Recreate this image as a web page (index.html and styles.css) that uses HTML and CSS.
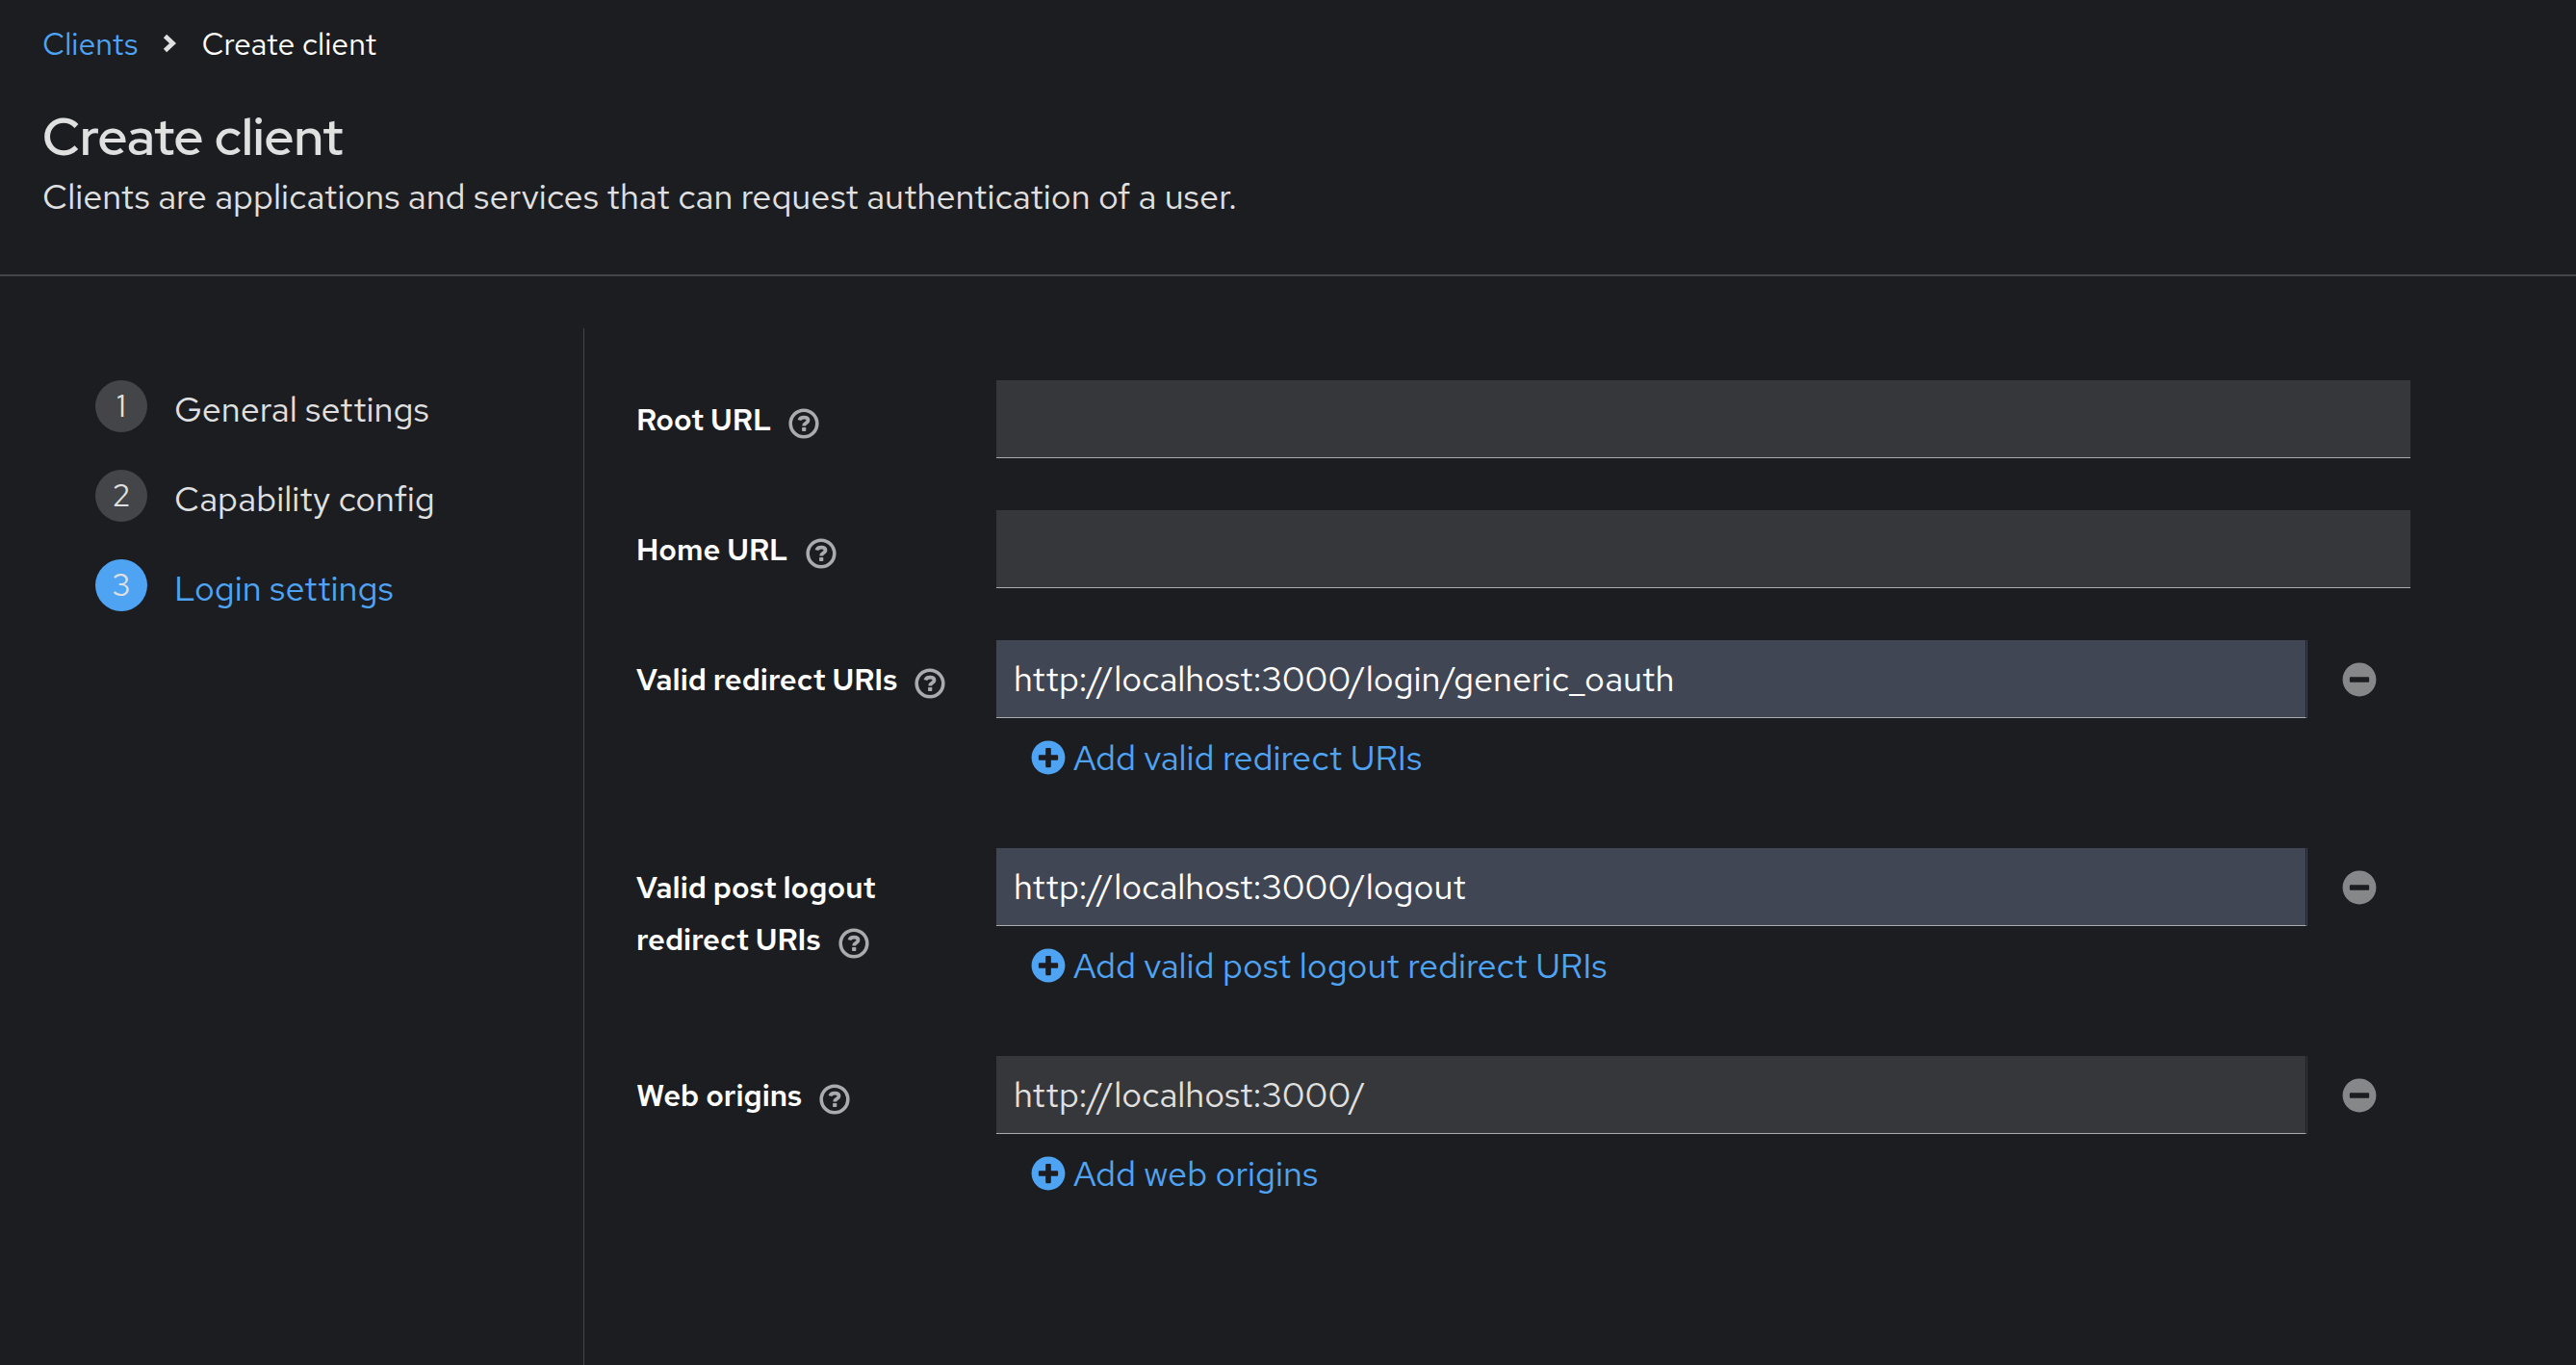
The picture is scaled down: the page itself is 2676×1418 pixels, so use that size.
FILE: index.html
```
<!DOCTYPE html>
<html lang="en">
<head>
<meta charset="utf-8">
<meta name="viewport" content="width=device-width, initial-scale=1">
<title>Create client</title>
<link rel="stylesheet" href="styles.css">
</head>
<body>
<svg class="sprite" aria-hidden="true">
  <symbol id="help" viewBox="0 0 32 32">
    <circle cx="16" cy="16" r="13.8" fill="none" stroke="currentColor" stroke-width="3.6"/>
    <path d="M11.4 12.6C12 10.4 13.700 9.700 16.1 9.700C18.700 9.700 20.500 10.800 20.500 12.700C20.500 15.600 16.2 15.200 16.2 18.400" fill="none" stroke="currentColor" stroke-width="3.8"/>
    <rect x="14.1" y="20" width="4.2" height="3.9" rx=".6" fill="currentColor"/>
  </symbol>
  <symbol id="plus" viewBox="0 0 512 512">
    <path fill="currentColor" d="M256 8C119 8 8 119 8 256s111 248 248 248 248-111 248-248S393 8 256 8zm144 276c0 6.600-5.400 12-12 12h-92v92c0 6.600-5.400 12-12 12h-56c-6.600 0-12-5.400-12-12v-92h-92c-6.600 0-12-5.400-12-12v-56c0-6.600 5.400-12 12-12h92v-92c0-6.600 5.400-12 12-12h56c6.600 0 12 5.400 12 12v92h92c6.600 0 12 5.400 12 12v56z"/>
  </symbol>
  <symbol id="minus" viewBox="0 0 512 512">
    <path fill="currentColor" d="M256 8C119 8 8 119 8 256s111 248 248 248 248-111 248-248S393 8 256 8zM124 296c-6.600 0-12-5.400-12-12v-56c0-6.600 5.400-12 12-12h264c6.600 0 12 5.400 12 12v56c0 6.600-5.400 12-12 12H124z"/>
  </symbol>
</svg>

<header class="page-header">
  <nav class="breadcrumb" aria-label="Breadcrumb">
    <a href="#clients">Clients</a>
    <svg class="chevron" viewBox="0 0 14 20" aria-hidden="true"><path d="M2.500 2.500L10.500 10L2.500 17.500" fill="none" stroke="currentColor" stroke-width="4.800"/></svg>
    <span aria-current="page">Create client</span>
  </nav>
  <h1 class="title">Create client</h1>
  <p class="description">Clients are applications and services that can request authentication of a user.</p>
</header>

<div class="wizard">
  <nav class="steps" aria-label="Wizard steps">
    <button class="step" type="button"><span class="step-number">1</span><span class="step-name">General settings</span></button>
    <button class="step" type="button"><span class="step-number">2</span><span class="step-name">Capability config</span></button>
    <button class="step current" type="button" aria-current="step"><span class="step-number">3</span><span class="step-name">Login settings</span></button>
  </nav>

  <main class="content">
    <form class="form">
      <div class="group">
        <div class="label"><label for="root-url">Root URL</label><button class="help" type="button" aria-label="Help for Root URL"><svg><use href="#help"/></svg></button></div>
        <div class="control"><input class="field" id="root-url" type="text"></div>
      </div>
      <div class="group">
        <div class="label"><label for="home-url">Home URL</label><button class="help" type="button" aria-label="Help for Home URL"><svg><use href="#help"/></svg></button></div>
        <div class="control"><input class="field" id="home-url" type="text"></div>
      </div>
      <div class="group">
        <div class="label"><label for="redirect">Valid redirect URIs</label><button class="help" type="button" aria-label="Help for Valid redirect URIs"><svg><use href="#help"/></svg></button></div>
        <div class="control">
          <div class="entry">
            <input class="field joined autofilled" id="redirect" type="text" value="http://localhost:3000/login/generic_oauth">
            <button class="remove" type="button" aria-label="Remove"><svg><use href="#minus"/></svg></button>
          </div>
          <button class="add" type="button"><svg><use href="#plus"/></svg>Add valid redirect URIs</button>
        </div>
      </div>
      <div class="group">
        <div class="label"><label for="post-logout">Valid post logout redirect URIs</label><button class="help" type="button" aria-label="Help for Valid post logout redirect URIs"><svg><use href="#help"/></svg></button></div>
        <div class="control">
          <div class="entry">
            <input class="field joined autofilled" id="post-logout" type="text" value="http://localhost:3000/logout">
            <button class="remove" type="button" aria-label="Remove"><svg><use href="#minus"/></svg></button>
          </div>
          <button class="add" type="button"><svg><use href="#plus"/></svg>Add valid post logout redirect URIs</button>
        </div>
      </div>
      <div class="group">
        <div class="label"><label for="origins">Web origins</label><button class="help" type="button" aria-label="Help for Web origins"><svg><use href="#help"/></svg></button></div>
        <div class="control">
          <div class="entry">
            <input class="field joined" id="origins" type="text" value="http://localhost:3000/">
            <button class="remove" type="button" aria-label="Remove"><svg><use href="#minus"/></svg></button>
          </div>
          <button class="add" type="button"><svg><use href="#plus"/></svg>Add web origins</button>
        </div>
      </div>
    </form>
  </main>
</div>
</body>
</html>
```
FILE: styles.css
```
:root {
  --bg: #1c1d21;
  --field: #36373a;
  --autofill: #404653;
  --line: #444548;
  --text: #e0e0e0;
  --muted: #aaabac;
  --link: #4fa3f3;
}

* { box-sizing: border-box; }

body {
  display: flex;
  flex-direction: column;
  min-height: 100vh;
  margin: 0;
  background: var(--bg);
  color: var(--text);
  font: 36px/54px "Red Hat Text", Roboto, sans-serif;
}

button {
  padding: 0;
  border: 0;
  background: none;
  color: inherit;
  font: inherit;
  text-align: left;
  cursor: pointer;
}

svg { display: block; flex: none; }
.sprite { position: absolute; width: 0; height: 0; }

.page-header {
  padding: 22px 44px 54px;
  border-bottom: 2px solid var(--line);
}

.breadcrumb {
  display: flex;
  align-items: center;
  margin-bottom: 37px;
  color: #fff;
  font-size: 32px;
  line-height: 48px;
}
.breadcrumb a { color: var(--link); text-decoration: none; }
.chevron {
  width: 14px;
  height: 20px;
  margin: 0 26px 2px;
  color: var(--text);
}

.title {
  margin: 0;
  font-family: "Red Hat Display", "Red Hat Text", Roboto, sans-serif;
  font-size: 54px;
  font-weight: 600;
  line-height: 70px;
}
.description { margin: 0; }

.wizard {
  display: flex;
  flex: 1;
  padding-top: 54px;
}

.steps {
  display: flex;
  flex: none;
  flex-direction: column;
  gap: 33px;
  width: 607px;
  padding: 54px 54px 54px 99px;
  border-right: 1px solid var(--line);
}
.step {
  display: flex;
  align-items: flex-start;
  gap: 28px;
}
.step-number {
  width: 54px;
  border-radius: 50%;
  background: var(--line);
  font-size: 32px;
  text-align: center;
}
.step-name { line-height: 60px; }
.current .step-name { color: var(--link); }
.current .step-number { background: var(--link); }

.content {
  flex: 1;
  padding: 54px 172px 54px 54px;
}
.form {
  display: grid;
  gap: 54px;
}
.group {
  display: grid;
  grid-template-columns: 338px 1fr;
  gap: 36px;
}

.label {
  padding-top: 14px;
  color: #fff;
  font-size: 31px;
  font-weight: 600;
}
.help {
  margin-left: 18px;
  color: var(--muted);
  line-height: 32px;
  vertical-align: -9px;
}
.help svg { width: 32px; height: 32px; }

.entry { display: flex; }
.field {
  display: block;
  width: 100%;
  min-width: 0;
  height: 81px;
  padding: 0 18px;
  border: 0;
  border-bottom: 1px solid var(--muted);
  border-radius: 0;
  outline: 0;
  background: var(--field);
  color: var(--text);
  font: inherit;
}
.joined {
  flex: 1;
  margin-right: 1px;
  border-right: 1px solid var(--bg);
  box-shadow: 1px 0 var(--field);
}
.autofilled {
  background: var(--autofill);
  box-shadow: 1px 0 var(--autofill);
  color: #fff;
}

.remove {
  display: flex;
  align-items: center;
  justify-content: center;
  width: 107px;
  color: #868789;
}
.remove svg { width: 36px; height: 36px; }

.add {
  display: flex;
  align-items: center;
  gap: 8px;
  height: 81px;
  padding: 0 36px;
  color: var(--link);
}
.add svg { width: 36px; height: 36px; }
```
